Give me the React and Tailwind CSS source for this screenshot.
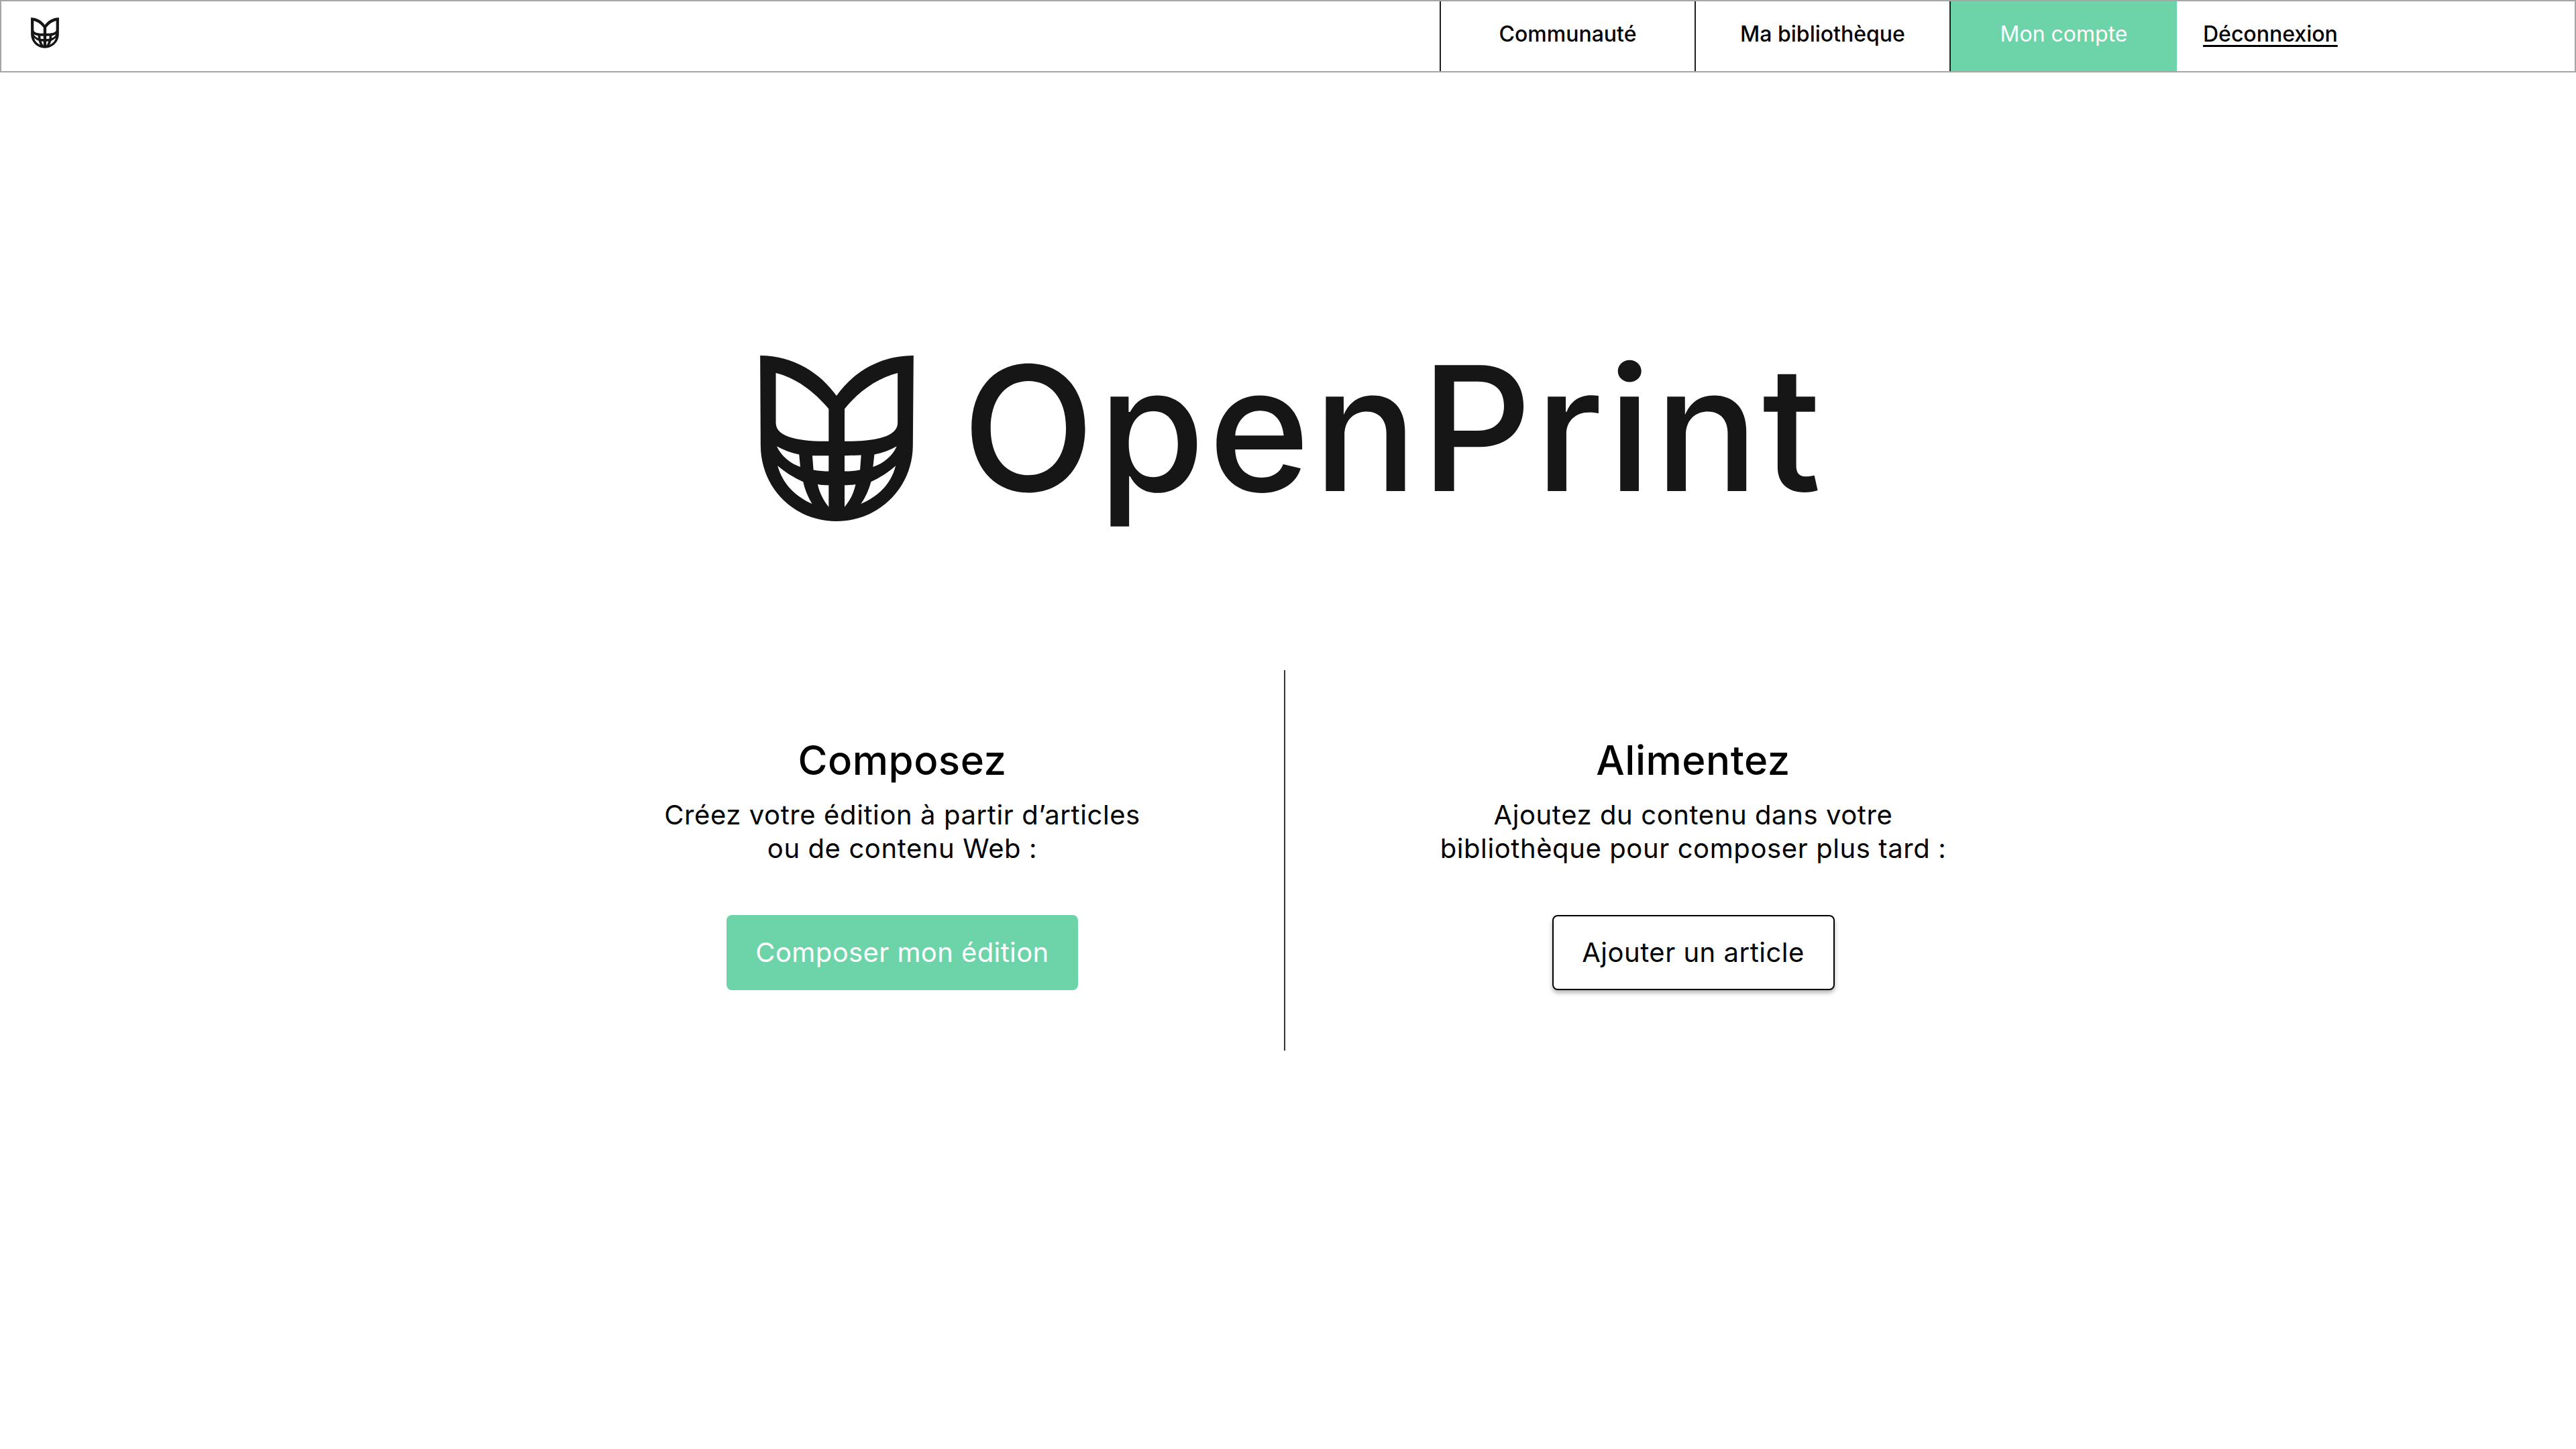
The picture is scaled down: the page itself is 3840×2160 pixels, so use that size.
import React from 'react';

const LOGO_PATH =
  'M100 90 C250 90 370 170 441 270 C510 170 630 90 785 90 L782 490 C782 680 630 830 441 830 C250 830 102 680 102 490 Z ' +
  'M170 168 C260 190 340 250 406 328 L406 473 C290 473 170 460 170 390 Z ' +
  'M714 168 C625 190 540 250 477 328 L477 473 C590 473 714 460 714 390 Z ' +
  'M174 495 C205 512 240 525 274 532 L279 587 C235 572 195 540 174 495 Z ' +
  'M333 537 L406 537 L406 607 C385 607 360 605 338 601 Z ' +
  'M477 537 L551 535 L546 601 C525 605 500 607 477 607 Z ' +
  'M710 495 C680 512 645 525 610 532 L604 587 C650 572 690 540 710 495 Z ' +
  'M178 582 C210 610 250 635 292 654 C300 690 315 725 332 752 C260 720 200 665 178 582 Z ' +
  'M357 665 C375 668 390 669 406 669 L406 766 C385 740 365 705 357 665 Z ' +
  'M477 669 C495 669 510 668 526 665 C518 705 500 740 477 766 Z ' +
  'M705 582 C675 610 635 635 595 654 C585 690 570 725 550 752 C625 720 685 665 705 582 Z';

function Logo({ className }) {
  return (
    <svg viewBox="100 90 685 740" className={className}>
      <path d={LOGO_PATH} fill="#161616" fillRule="evenodd" />
    </svg>
  );
}

function NavCell({ children, active }) {
  return (
    <a className={`flex h-full items-center justify-center border-l-2 border-[#1f1f1f] pb-[6px] ${active ? 'w-[339px] bg-[#6dd3a9] font-normal text-white' : 'w-[380px] text-black'}`}>
      {children}
    </a>
  );
}

function Column({ title, lines, className, children }) {
  return (
    <div className={`flex flex-col items-center pt-[94px] ${className}`}>
      <h2 className="text-[60px] leading-[80px] font-medium text-black tracking-[0.5px]">{title}</h2>
      <p className="mt-[17px] text-center text-[40px] leading-[50px] tracking-[0.6px] text-black">
        {lines[0]}
        <br />
        {lines[1]}
      </p>
      {children}
    </div>
  );
}

export default function App() {
  return (
    <div className="min-h-[2160px] bg-white font-['Inter',sans-serif]">
      <nav className="flex h-[108px] items-center border-2 border-[#a6a6a6] text-[32px] font-medium">
        <div className="mb-[10px] w-[2144px] pl-[44px]">
          <Logo className="h-[46px] w-[42px]" />
        </div>
        <NavCell>Communauté</NavCell>
        <NavCell>Ma bibliothèque</NavCell>
        <NavCell active>Mon compte</NavCell>
        <a className="mb-[6px] pl-[39px] text-black underline underline-offset-[5px]">Déconnexion</a>
      </nav>

      <header className="flex items-start pt-[422px] pl-[1133px]">
        <Logo className="h-[247px] w-[229px]" />
        <h1 className="ml-[72px] -mt-[52px] text-[258px] leading-[320px] font-medium tracking-[5px] text-[#161616]">OpenPrint</h1>
      </header>

      <main className="mt-[201px] flex pl-[776px]">
        <Column title="Composez" lines={['Créez votre édition à partir d’articles', 'ou de contenu Web :']} className="h-[567px] w-[1140px] border-r-2 border-[#333]">
          <button className="mt-[74px] flex h-[112px] w-[524px] items-center justify-center rounded-lg bg-[#6dd3a9] text-[40px] tracking-[0.4px] text-white">
            Composer mon édition
          </button>
        </Column>
        <Column title="Alimentez" lines={['Ajoutez du contenu dans votre', 'bibliothèque pour composer plus tard :']} className="h-[567px] w-[1216px]">
          <button className="mt-[74px] flex h-[112px] w-[421px] items-center justify-center rounded-lg border-2 border-black bg-white text-[40px] tracking-[0.5px] text-black shadow-[0_4px_6px_rgba(0,0,0,0.3)]">
            Ajouter un article
          </button>
        </Column>
      </main>
    </div>
  );
}
